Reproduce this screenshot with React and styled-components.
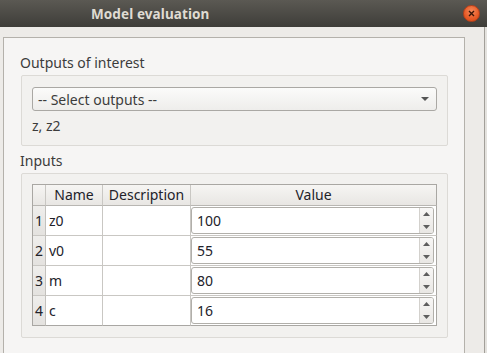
import React from 'react'
import styled, { createGlobalStyle } from 'styled-components'

const inputs = [
  { name: 'z0', value: '100' },
  { name: 'v0', value: '55' },
  { name: 'm', value: '80' },
  { name: 'c', value: '16' },
]

const App = () => {
  return (
    <>
      <GlobalStyle />
      <Window>
        <TitleBar>
          <Title>Model evaluation</Title>
          <CloseButton>
            <svg width="7" height="7" viewBox="0 0 7 7">
              <path d="M1 1 L6 6 M6 1 L1 6" stroke="#3b1608" strokeWidth="1.4" />
            </svg>
          </CloseButton>
        </TitleBar>

        <Body>
          <Panel>
            <SectionLabel>Outputs of interest</SectionLabel>
            <GroupBox>
              <Combo>
                <span>-- Select outputs --</span>
                <svg width="8" height="4" viewBox="0 0 8 4">
                  <path d="M0 0 L8 0 L4 4 Z" fill="#555" />
                </svg>
              </Combo>
              <Selected>z, z2</Selected>
            </GroupBox>

            <SectionLabel $top={6}>Inputs</SectionLabel>
            <GroupBox $table>
              <Table>
                <HeadCell />
                <HeadCell>Name</HeadCell>
                <HeadCell>Description</HeadCell>
                <HeadCell $last>Value</HeadCell>
                {inputs.map((row, i) => (
                  <React.Fragment key={row.name}>
                    <RowNumber $bottom={i === inputs.length - 1}>{i + 1}</RowNumber>
                    <Cell $bottom={i === inputs.length - 1}>{row.name}</Cell>
                    <Cell $bottom={i === inputs.length - 1} />
                    <ValueCell $bottom={i === inputs.length - 1}>
                      <SpinBox>
                        <SpinText>{row.value}</SpinText>
                        <SpinButtons>
                          <SpinArrow>
                            <svg width="7" height="4" viewBox="0 0 7 4">
                              <path d="M0 4 L7 4 L3.5 0 Z" fill="#5e5e5e" />
                            </svg>
                          </SpinArrow>
                          <SpinArrow>
                            <svg width="7" height="4" viewBox="0 0 7 4">
                              <path d="M0 0 L7 0 L3.5 4 Z" fill="#5e5e5e" />
                            </svg>
                          </SpinArrow>
                        </SpinButtons>
                      </SpinBox>
                    </ValueCell>
                  </React.Fragment>
                ))}
              </Table>
            </GroupBox>
          </Panel>
          <Margin />
          <Edge />
        </Body>
      </Window>
    </>
  )
}

const GlobalStyle = createGlobalStyle`
  html, body {
    margin: 0;
    padding: 0;
  }
  body {
    width: 487px;
    height: 353px;
    overflow: hidden;
    background: #3a3935;
    font-family: "Noto Sans", "DejaVu Sans", sans-serif;
  }
`

const Window = styled.div`
  width: 487px;
  height: 353px;
  display: flex;
  flex-direction: column;
`

const TitleBar = styled.header`
  height: 27px;
  flex: none;
  display: flex;
  align-items: center;
  background: linear-gradient(#5b5953, #3e3d39);
`

const Title = styled.div`
  padding-left: 91px;
  font-size: 13.5px;
  font-weight: 700;
  color: #dfdbd2;
  letter-spacing: 0.1px;
`

const CloseButton = styled.div`
  margin-left: auto;
  margin-right: 7px;
  width: 17px;
  height: 17px;
  border-radius: 50%;
  box-sizing: border-box;
  border: 1px solid #b8401a;
  background: radial-gradient(circle at 50% 35%, #f58a5c, #e65a26 60%, #d84a18);
  display: flex;
  align-items: center;
  justify-content: center;
`

const Body = styled.div`
  flex: 1;
  display: flex;
  background: #edebe8;
  min-height: 0;
`

const Panel = styled.div`
  margin: 10px 0 0 3px;
  width: 462px;
  box-sizing: border-box;
  border: 1px solid #b4b1ab;
  border-bottom: none;
  background: #f6f5f4;
  padding: 16px 16px 0 17px;
`

const Margin = styled.div`
  flex: 1;
`

const Edge = styled.div`
  width: 2px;
  border-left: 1px solid #a29f99;
  background: #e4e2de;
`

const SectionLabel = styled.div`
  margin-top: ${p => p.$top || 0}px;
  margin-bottom: 3px;
  margin-left: -1px;
  font-size: 14px;
  line-height: 18px;
  color: #3c3c3c;
`

const GroupBox = styled.div`
  border: 1px solid #dcdad6;
  border-radius: 2px;
  background: #f2f1ef;
  padding: ${p => (p.$table ? '10px 10px 11px 10px' : '11px 10px 10px 10px')};
`

const Combo = styled.div`
  height: 24px;
  box-sizing: border-box;
  border: 1px solid #aaa8a4;
  border-radius: 3px;
  background: linear-gradient(#fbfbfa, #eeedeb);
  display: flex;
  align-items: center;
  justify-content: space-between;
  padding: 0 7px 0 5px;
  font-size: 14px;
  color: #3c3c3c;
`

const Selected = styled.div`
  margin-top: 6px;
  font-size: 14px;
  line-height: 18px;
  color: #3c3c3c;
`

const Table = styled.div`
  display: grid;
  grid-template-columns: 13px 57px 88px 1fr;
  border-left: 1px solid #a9a7a3;
  border-top: 1px solid #a9a7a3;
  font-size: 14px;
  color: #22222a;
`

const HeadCell = styled.div`
  height: 20px;
  border-right: 1px solid ${p => (p.$last ? '#a9a7a3' : '#c9c7c3')};
  border-bottom: 1px solid #b8b6b2;
  background: linear-gradient(#f6f5f3, #e8e6e3);
  display: flex;
  align-items: center;
  justify-content: center;
  line-height: 18px;
`

const RowNumber = styled.div`
  height: 29px;
  border-right: 1px solid #c3c1bd;
  border-bottom: 1px solid ${p => (p.$bottom ? '#a9a7a3' : '#c9c7c3')};
  background: linear-gradient(#efeeec, #e4e2df);
  display: flex;
  align-items: center;
  justify-content: center;
`

const Cell = styled.div`
  height: 29px;
  border-right: 1px solid #c9c7c3;
  border-bottom: 1px solid ${p => (p.$bottom ? '#a9a7a3' : '#c9c7c3')};
  background: #fff;
  display: flex;
  align-items: center;
  padding-left: 3px;
`

const ValueCell = styled.div`
  height: 29px;
  box-sizing: border-box;
  border-right: 1px solid #a9a7a3;
  border-bottom: 1px solid ${p => (p.$bottom ? '#a9a7a3' : '#c9c7c3')};
  background: #fff;
  padding: 1px 2px 1px 0;
  height: 30px;
  display: flex;
`

const SpinBox = styled.div`
  flex: 1;
  display: flex;
  border: 1px solid #b1afaa;
  border-radius: 3px;
  background: #fff;
  overflow: hidden;
`

const SpinText = styled.div`
  flex: 1;
  display: flex;
  align-items: center;
  padding-left: 5px;
`

const SpinButtons = styled.div`
  width: 13px;
  border-left: 1px solid #d3d1cd;
  background: linear-gradient(#f8f7f6, #e9e7e4);
  display: flex;
  flex-direction: column;
`

const SpinArrow = styled.div`
  flex: 1;
  display: flex;
  align-items: center;
  justify-content: center;
`

export default App
